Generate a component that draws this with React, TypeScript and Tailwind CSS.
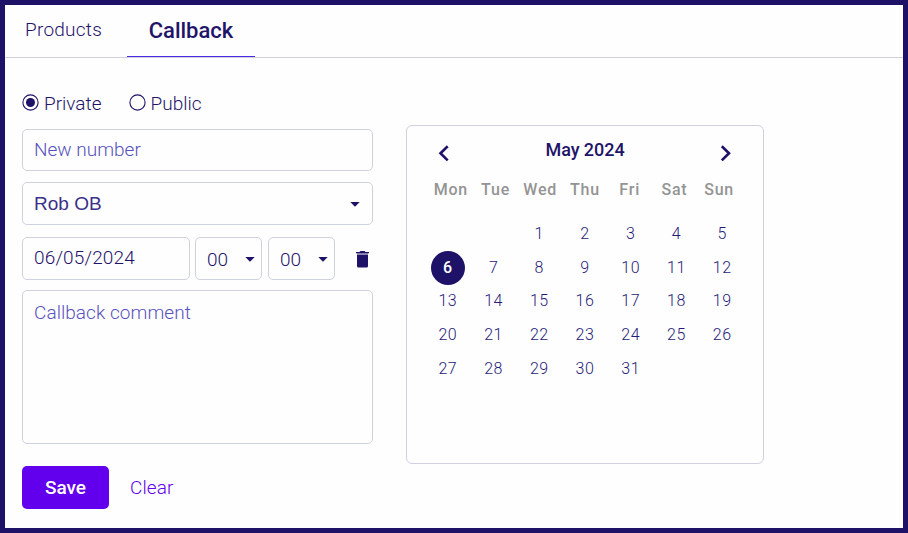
import { useState } from "react";

const weekDays = ["Mon", "Tue", "Wed", "Thu", "Fri", "Sat", "Sun"];
const days = Array.from({ length: 31 }, (_, i) => i + 1);

const Caret = () => (
  <svg className="mt-px" width="10" height="5" viewBox="0 0 10 5" fill="#1d1267">
    <path d="M0.3 0h9.4L5 4.8z" />
  </svg>
);

const Radio = ({ label, checked, onClick }: any) => (
  <div className="flex items-center" onClick={onClick}>
    <svg className="mb-[2px]" width="17" height="17" viewBox="0 0 17 17">
      <circle cx="8.5" cy="8.5" r="7.6" fill="none" stroke="#1d1267" strokeWidth="1.1" />
      {checked && <circle cx="8.5" cy="8.5" r="4.5" fill="#1d1267" />}
    </svg>
    <span className="ml-[5px] mt-[2px] leading-5">{label}</span>
  </div>
);

const Calendar = () => {
  const [selected, setSelected] = useState(6);

  return (
    <div className="ml-[33px] mt-[35px] h-[339px] w-[358px] rounded-md border border-[#d0d0e0] px-[18px]">
      <div className="flex h-[52px] justify-between pl-[13px] pr-[13px] pt-[14px]">
        <svg className="mt-[5px]" width="12" height="17" viewBox="0 0 12 17" fill="none" stroke="#1d1267" strokeWidth="2.6">
          <path d="M9.7 1.2L2.5 8.3l7.2 7.1" />
        </svg>
        <div className="text-[18px] font-medium leading-5 tracking-[-0.05px]">May 2024</div>
        <svg className="mt-[5px]" width="12" height="17" viewBox="0 0 12 17" fill="none" stroke="#1d1267" strokeWidth="2.6">
          <path d="M1.8 1.2L9 8.3l-7.2 7.1" />
        </svg>
      </div>
      <div className="ml-[3.5px] grid w-[313px] grid-cols-7 text-center text-[16px] font-medium leading-6 tracking-[0.8px] text-[#949494]">
        {weekDays.map((day) => (
          <div key={day}>{day}</div>
        ))}
      </div>
      <div className="mt-[15px] grid w-[320px] auto-rows-[33.8px] grid-cols-7 text-[16px] font-light tracking-[0.5px] text-[#261a78]">
        {days.map((day) => (
          <div
            key={day}
            onClick={() => setSelected(day)}
            className={`flex items-center justify-center ${day === 1 ? "col-start-3" : ""}`}
          >
            {day === selected ? (
              <span className="flex size-[34px] shrink-0 items-center justify-center rounded-full bg-[#1d1267] font-medium text-white">
                {day}
              </span>
            ) : (
              day
            )}
          </div>
        ))}
      </div>
    </div>
  );
};

export default function App() {
  const [visibility, setVisibility] = useState("private");

  return (
    <div className="h-[533px] w-[908px] border-[5px] border-[#1d1267] bg-[#fefefe] font-['Roboto',sans-serif] text-[19px] font-light text-[#1f1469]">
      <div className="flex h-[53px] border-b border-[#d3d0dd]">
        <div className="w-[122px] pl-5 pt-[14px] leading-[22px] tracking-[0.25px]">Products</div>
        <div className="h-[52px] w-[128px] border-b border-[#4a2be8] pt-[14px] text-center text-[22px] font-medium leading-6">
          Callback
        </div>
      </div>
      <div className="flex pl-[17px] pt-8">
        <div className="w-[351px]">
          <div className="mt-1 flex h-[18px] items-center gap-[27px]">
            <Radio label="Private" checked={visibility === "private"} onClick={() => setVisibility("private")} />
            <Radio label="Public" checked={visibility === "public"} onClick={() => setVisibility("public")} />
          </div>
          <input
            className="mt-[17px] block h-[42px] w-full rounded-[5px] border border-[#cfd2de] px-[11px] pb-[2px] placeholder:text-[#5751bd]"
            placeholder="New number"
          />
          <div className="mt-[11px] flex h-[43px] items-center justify-between rounded-[5px] border border-[#cfd2de] pl-[11px] pr-3">
            <span className="mt-[2px] font-['Liberation_Sans',sans-serif] text-[#3b308a]">Rob OB</span>
            <Caret />
          </div>
          <div className="mt-3 flex h-[43px] items-center">
            <div className="h-full w-[168px] rounded-[5px] border border-[#cfd2de] pl-[11px] leading-[40px] tracking-[0.15px]">
              06/05/2024
            </div>
            <div className="ml-[5px] flex h-full w-[67px] items-center justify-between rounded-[5px] border border-[#cfd2de] pl-[11px] pr-[6px]">
              <span className="mt-[3px]">00</span>
              <Caret />
            </div>
            <div className="ml-[6px] flex h-full w-[67px] items-center justify-between rounded-[5px] border border-[#cfd2de] pl-[11px] pr-[6px]">
              <span className="mt-[3px]">00</span>
              <Caret />
            </div>
            <svg className="ml-[21px] mt-[2px]" width="13" height="17" viewBox="0 0 13 17" fill="#1d1267">
              <path d="M0 1h3.5l1-1h4l1 1H13v1.2H0z" />
              <path opacity="0.5" d="M1 2.2h11V4H1z" />
              <path d="M1 4h11v11a1.5 1.5 0 0 1-1.5 1.5h-8A1.5 1.5 0 0 1 1 15z" />
            </svg>
          </div>
          <textarea
            className="mt-[10px] block h-[154px] w-full resize-none rounded-[5px] border border-[#cfd2de] px-[11px] py-[10px] leading-6 tracking-[0.05px] placeholder:text-[#5751bd]"
            placeholder="Callback comment"
          />
          <div className="mt-[22px] flex h-[43px] items-center">
            <button className="h-full w-[87px] rounded-[5px] bg-[#6200ee] pt-[2px] font-medium text-white">
              Save
            </button>
            <button className="ml-[21px] mt-[2px] tracking-[0.1px] text-[#6200ee]">Clear</button>
          </div>
        </div>
        <Calendar />
      </div>
    </div>
  );
}
